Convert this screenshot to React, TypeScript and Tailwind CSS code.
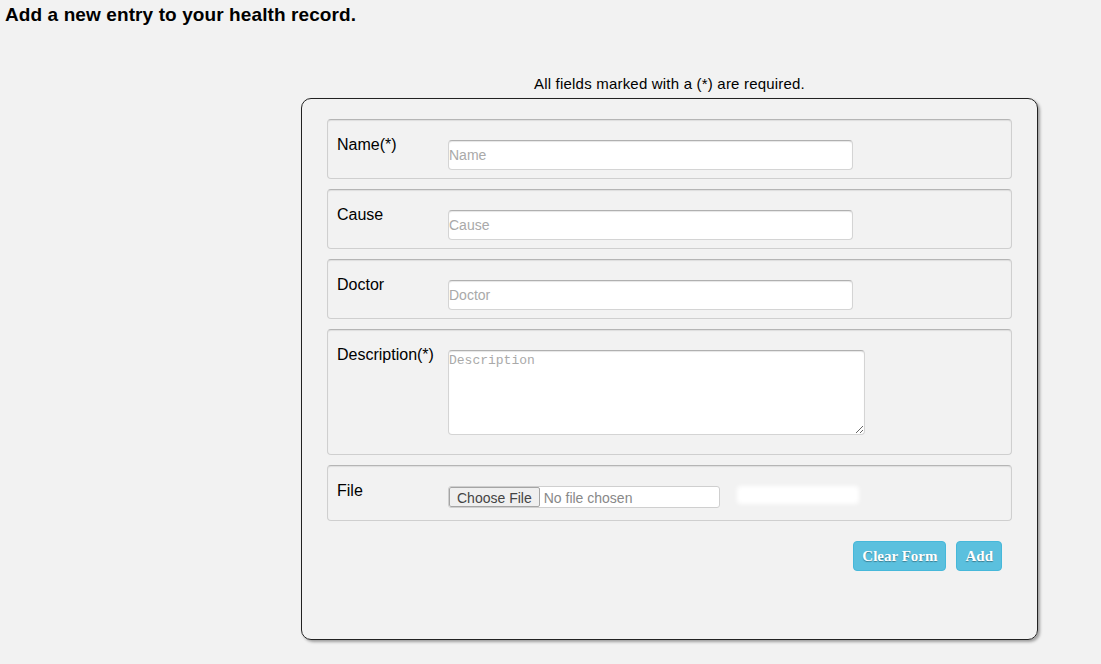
import React from "react"

const fields = [
  { label: "Name(*)", placeholder: "Name" },
  { label: "Cause", placeholder: "Cause" },
  { label: "Doctor", placeholder: "Doctor" },
]

function FieldBox({ children, className = "" }: { children: React.ReactNode; className?: string }) {
  return (
    <div
      className={`flex items-start rounded-[4px] border border-[#cfcfcf] border-t-[#b5b5b5] pl-[9px] shadow-[inset_0_1px_1px_rgba(0,0,0,0.08)] ${className}`}
    >
      {children}
    </div>
  )
}

export default function App() {
  return (
    <div className="min-h-[664px] bg-[#f2f2f2] pt-[4px] font-['Liberation_Sans',Arial,sans-serif] text-black">
      <h1 className="pl-[5px] text-[19px] font-bold leading-[21px] tracking-[0.1px]">
        Add a new entry to your health record.
      </h1>

      <div className="ml-[301px] mt-[50px] w-[737px]">
        <p className="mb-[6px] text-center text-[15px] leading-[17px] tracking-[0.2px]">
          All fields marked with a (*) are required.
        </p>

        <form className="flex h-[542px] flex-col gap-[10px] rounded-[10px] border border-[#222] px-[25px] pt-[20px] shadow-[2px_2px_3px_rgba(0,0,0,0.35)]">
          {fields.map((f) => (
            <FieldBox key={f.label} className="h-[60px] pt-[16px]">
              <label className="w-[111px] shrink-0 text-[16px] leading-[18px]">{f.label}</label>
              <input
                type="text"
                placeholder={f.placeholder}
                className="mt-[4px] h-[30px] w-[405px] rounded-[4px] border border-[#d4d4d4] border-t-[#b0b0b0] bg-white px-0 text-[14px] shadow-[inset_0_1px_1px_rgba(0,0,0,0.1)] outline-none placeholder:text-[#a9a9a9]"
              />
            </FieldBox>
          ))}

          <FieldBox className="h-[126px] pt-[16px]">
            <label className="w-[111px] shrink-0 text-[16px] leading-[18px]">Description(*)</label>
            <textarea
              placeholder="Description"
              className="mt-[4px] block h-[85px] w-[417px] resize rounded-[4px] border border-[#d4d4d4] border-t-[#b0b0b0] bg-white px-0 py-[2px] font-['Liberation_Mono',monospace] text-[13px] leading-[15px] shadow-[inset_0_1px_1px_rgba(0,0,0,0.1)] outline-none placeholder:text-[#a9a9a9]"
            />
          </FieldBox>

          <FieldBox className="relative h-[56px] pt-[16px]">
            <label className="w-[111px] shrink-0 text-[16px] leading-[18px]">File</label>
            <input
              type="file"
              className="mt-[4px] h-[22px] w-[272px] rounded-[3px] border border-[#cfcfcf] bg-white text-[14px] leading-[20px] text-[#888] file:mr-[4px] file:h-[20px] file:rounded-[2px] file:border file:border-[#a5a5a5] file:bg-[#efefef] file:px-[7px] file:text-[14px] file:text-[#444]"
            />
            <div className="absolute left-[409px] top-[20px] h-[18px] w-[122px] rounded-[4px] bg-white blur-[2px]" />
          </FieldBox>

          <div className="mt-[10px] flex justify-end gap-[10px] pr-[10px]">
            <button
              type="button"
              className="h-[30px] rounded-[4px] border border-[#46b8da] bg-[#5bc0de] px-[8px] font-['Liberation_Serif',serif] text-[15px] font-bold text-white [text-shadow:0_1px_1px_rgba(0,0,0,0.35)]"
            >
              Clear Form
            </button>
            <button
              type="button"
              className="h-[30px] rounded-[4px] border border-[#46b8da] bg-[#5bc0de] px-[8px] font-['Liberation_Serif',serif] text-[15px] font-bold text-white [text-shadow:0_1px_1px_rgba(0,0,0,0.35)]"
            >
              Add
            </button>
          </div>
        </form>
      </div>
    </div>
  )
}
